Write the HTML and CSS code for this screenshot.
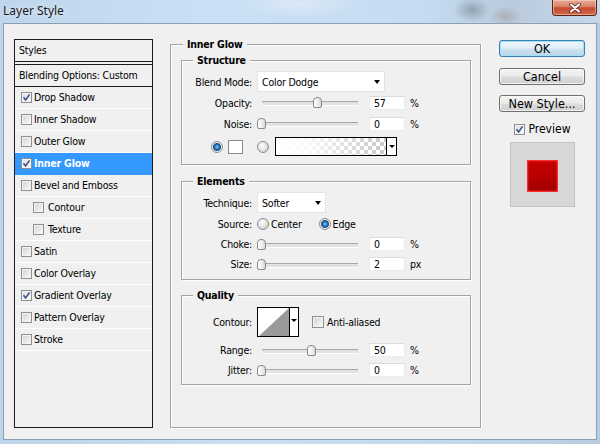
FILE: index.html
```html
<!DOCTYPE html>
<html>
<head>
<meta charset="utf-8">
<title>Layer Style</title>
<link rel="stylesheet" href="styles.css">
</head>
<body>
<div class="window">
  <div class="titlebar">
    <span class="title">Layer Style</span>
    <div class="close">
      <svg width="12" height="10" viewBox="0 0 12 10">
        <path d="M2 1.5 L10 8.5 M10 1.5 L2 8.5" stroke="#4a1c12" stroke-width="3.6" stroke-linecap="round" fill="none"/>
        <path d="M2 1.5 L10 8.5 M10 1.5 L2 8.5" stroke="#ffffff" stroke-width="2.2" stroke-linecap="round" fill="none"/>
      </svg>
    </div>
  </div>
  <div class="client">
    <div class="styles-list">
      <div class="list-head">Styles</div>
      <div class="list-blend">Blending Options: Custom</div>
      <div class="item"><span class="cb on"><svg width="9" height="9" viewBox="0 0 9 9"><path d="M1.5 4.3 L3.6 7 L7.6 1.4" stroke="#3b4f91" stroke-width="1.6" fill="none"/></svg></span>Drop Shadow</div>
      <div class="item"><span class="cb"></span>Inner Shadow</div>
      <div class="item"><span class="cb"></span>Outer Glow</div>
      <div class="item selected"><span class="cb on"><svg width="9" height="9" viewBox="0 0 9 9"><path d="M1.5 4.3 L3.6 7 L7.6 1.4" stroke="#3b4f91" stroke-width="1.6" fill="none"/></svg></span>Inner Glow</div>
      <div class="item"><span class="cb"></span>Bevel and Emboss</div>
      <div class="item sub"><span class="cb"></span>Contour</div>
      <div class="item sub"><span class="cb"></span>Texture</div>
      <div class="item"><span class="cb"></span>Satin</div>
      <div class="item"><span class="cb"></span>Color Overlay</div>
      <div class="item"><span class="cb on"><svg width="9" height="9" viewBox="0 0 9 9"><path d="M1.5 4.3 L3.6 7 L7.6 1.4" stroke="#3b4f91" stroke-width="1.6" fill="none"/></svg></span>Gradient Overlay</div>
      <div class="item"><span class="cb"></span>Pattern Overlay</div>
      <div class="item"><span class="cb"></span>Stroke</div>
    </div>

    <div class="group outer">
      <div class="gtitle">Inner Glow</div>

      <div class="group sub-group structure">
        <div class="gtitle">Structure</div>
        <div class="row blend-row">
          <span class="lbl">Blend Mode:</span>
          <div class="select select-blend">Color Dodge<span class="arrow"></span></div>
        </div>
        <div class="row">
          <span class="lbl">Opacity:</span>
          <div class="slider"><span class="thumb" style="left:56px"></span></div>
          <div class="num">57</div><span class="unit">%</span>
        </div>
        <div class="row">
          <span class="lbl">Noise:</span>
          <div class="slider"><span class="thumb" style="left:0px"></span></div>
          <div class="num">0</div><span class="unit">%</span>
        </div>
        <div class="row color-row">
          <span class="radio on"></span>
          <span class="swatch"></span>
          <span class="radio radio2"></span>
          <div class="gradbox"><span class="grad"></span><span class="gradarrow"><span class="arrow"></span></span></div>
        </div>
      </div>

      <div class="group sub-group elements">
        <div class="gtitle">Elements</div>
        <div class="row tech-row">
          <span class="lbl">Technique:</span>
          <div class="select select-tech">Softer<span class="arrow"></span></div>
        </div>
        <div class="row source-row">
          <span class="lbl">Source:</span>
          <span class="radio"></span><span class="rtext">Center</span>
          <span class="radio on edge-radio"></span><span class="rtext">Edge</span>
        </div>
        <div class="row row20">
          <span class="lbl">Choke:</span>
          <div class="slider"><span class="thumb" style="left:0px"></span></div>
          <div class="num">0</div><span class="unit">%</span>
        </div>
        <div class="row row20">
          <span class="lbl">Size:</span>
          <div class="slider"><span class="thumb" style="left:0px"></span></div>
          <div class="num">2</div><span class="unit">px</span>
        </div>
      </div>

      <div class="group sub-group quality">
        <div class="gtitle">Quality</div>
        <div class="row contour-row">
          <span class="lbl">Contour:</span>
          <div class="contour">
            <svg class="curve" width="31" height="28" viewBox="0 0 31 28"><polygon points="1,28 31,0 31,28" fill="#9a9a9a"/></svg>
            <span class="carrow"><span class="arrow"></span></span>
          </div>
          <span class="cb aa"></span><span class="aatext">Anti-aliased</span>
        </div>
        <div class="row row20 range-row">
          <span class="lbl">Range:</span>
          <div class="slider"><span class="thumb" style="left:50px"></span></div>
          <div class="num">50</div><span class="unit">%</span>
        </div>
        <div class="row row20">
          <span class="lbl">Jitter:</span>
          <div class="slider"><span class="thumb" style="left:0px"></span></div>
          <div class="num">0</div><span class="unit">%</span>
        </div>
      </div>
    </div>

    <div class="side">
      <div class="btn default">OK</div>
      <div class="btn btn-cancel">Cancel</div>
      <div class="btn btn-new">New Style...</div>
      <div class="preview-row"><span class="cb on"><svg width="9" height="9" viewBox="0 0 9 9"><path d="M1.5 4.3 L3.6 7 L7.6 1.4" stroke="#3b4f91" stroke-width="1.6" fill="none"/></svg></span><span class="ptext">Preview</span></div>
      <div class="preview-box"><div class="red"></div></div>
    </div>
  </div>
</div>
</body>
</html>
```

FILE: styles.css
```css
* { box-sizing: border-box; }
html, body { margin: 0; padding: 0; }
body {
  width: 600px;
  height: 444px;
  overflow: hidden;
  font-family: "DejaVu Sans Condensed", "DejaVu Sans", sans-serif;
  font-size: 10.5px;
  letter-spacing: -0.2px;
  color: #000;
  background: linear-gradient(to right, #bcd3e9 0%, #c9def2 40%, #c3d9ee 75%, #b7ccdf 100%);
}
.window { display: flex; flex-direction: column; height: 444px; }

.titlebar {
  height: 23px;
  flex: none;
  display: flex;
  align-items: flex-start;
  justify-content: space-between;
  background:
    radial-gradient(ellipse 18px 12px at 472px 10px, rgba(80, 92, 104, 0.4), rgba(80, 92, 104, 0) 100%),
    radial-gradient(ellipse 16px 10px at 505px 16px, rgba(150, 110, 100, 0.3), rgba(150, 110, 100, 0) 100%),
    radial-gradient(ellipse 60px 14px at 300px 4px, rgba(255, 255, 255, 0.35), rgba(255, 255, 255, 0) 100%),
    linear-gradient(to right, #bed5eb 0%, #cbe0f4 35%, #c6dcf1 70%, #b9cbdc 85%, #c5d7e8 100%);
}
.title {
  font-family: "Noto Sans", "Open Sans", sans-serif;
  font-size: 12px;
  letter-spacing: 0;
  line-height: 22px;
  padding-left: 3px;
  color: #1a1a1a;
  text-shadow: 0 0 6px rgba(255, 255, 255, 0.9);
}
.close {
  width: 45px;
  height: 16px;
  margin-right: 3px;
  border: 1px solid #5a2318;
  border-top: none;
  border-radius: 0 0 4px 4px;
  background: linear-gradient(#e8ab98 0%, #d98066 45%, #c44a30 52%, #cf6a4d 100%);
  box-shadow: inset 0 0 0 1px rgba(255, 220, 200, 0.5);
  display: flex;
  align-items: center;
  justify-content: center;
}

.client {
  margin: 0 3px;
  height: 417px;
  flex: none;
  border: 1px solid #8d9fb4;
  background: #f0f0f0;
  display: flex;
  align-items: flex-start;
  padding: 15px 0 0 10px;
}

/* styles list */
.styles-list {
  width: 139px;
  height: 389px;
  flex: none;
  border: 1px solid #1c1c1c;
  background: #f0f0f0;
  display: flex;
  flex-direction: column;
}
.list-head {
  height: 22px;
  border-bottom: 1px solid #1c1c1c;
  padding: 0 0 1px 4px;
  display: flex;
  align-items: center;
}
.list-blend {
  margin-top: 2px;
  height: 23px;
  border-top: 1px solid #1c1c1c;
  border-bottom: 1px solid #1c1c1c;
  padding: 0 0 1px 4px;
  display: flex;
  align-items: center;
}
.item {
  height: 22px;
  border-bottom: 1px solid #ffffff;
  padding: 0 0 1px 6px;
  display: flex;
  align-items: center;
}
.item .cb { margin-right: 2px; }
.item.sub { padding-left: 18px; }
.item.sub .cb { margin-right: 4px; }
.item.selected {
  background: #3399ff;
  border-bottom-color: #3399ff;
  color: #fff;
  font-weight: bold;
}

.cb {
  width: 11px;
  height: 11px;
  flex: none;
  border: 1px solid #8e8f8f;
  background: linear-gradient(135deg, #d2d2d2 0%, #eeeeee 70%, #f8f8f8 100%);
  box-shadow: inset 0 0 0 1px #f4f4f4;
  display: flex;
  align-items: center;
  justify-content: center;
}
.cb.on { background: linear-gradient(135deg, #dedede 0%, #f4f4f4 70%, #fafafa 100%); }

/* groups */
.group {
  border: 1px solid #a3a3a3;
  box-shadow: inset 1px 1px 0 #ffffff, 1px 1px 0 #ffffff;
}
.gtitle {
  width: max-content;
  height: 13px;
  line-height: 13px;
  margin-top: -7px;
  padding: 0 4px;
  background: #f0f0f0;
  font-weight: bold;
}
.outer {
  width: 311px;
  height: 384px;
  flex: none;
  margin-left: 17px;
  margin-top: 5px;
}
.outer > .gtitle { margin-left: 12px; }
.sub-group { width: 290px; margin-left: 10px; }
.sub-group > .gtitle { margin-left: 11px; }
.structure { margin-top: 9px; padding-bottom: 8px; }
.elements { margin-top: 16px; padding-bottom: 5px; }
.quality { margin-top: 15px; padding-bottom: 4px; }

.row { display: flex; align-items: center; height: 21px; }
.row20 { height: 20px; }
.blend-row, .tech-row { margin-top: 4px; }
.lbl { width: 70px; flex: none; text-align: right; margin-right: 5px; }

.select {
  height: 21px;
  display: flex;
  align-items: center;
  background: #fff;
  border: 1px solid #e4e4e4;
  padding-left: 4px;
}
.select-blend { width: 128px; }
.select-tech { width: 69px; }
.arrow {
  width: 0;
  height: 0;
  border-left: 3.5px solid transparent;
  border-right: 3.5px solid transparent;
  border-top: 4px solid #000;
}
.select .arrow { margin-left: auto; margin-right: 4px; }

.slider { position: relative; width: 104px; height: 13px; flex: none; }
.slider::before {
  content: "";
  position: absolute;
  left: 5px;
  right: 3px;
  top: 5px;
  height: 3px;
  border-top: 1px solid #a8a8a8;
  border-bottom: 1px solid #ffffff;
  background: #e2e2e2;
}
.thumb {
  position: absolute;
  top: 1px;
  width: 9px;
  height: 11px;
  border: 1px solid #8a8a8a;
  border-radius: 4px 4px 2px 2px;
  background: linear-gradient(to right, #ffffff 0%, #ececec 60%, #d6d6d6 100%);
}
.num {
  width: 36px;
  height: 14px;
  flex: none;
  margin-left: 8px;
  background: #fff;
  border: 1px solid #ebebeb;
  border-top-color: #dcdcdc;
  padding-left: 4px;
  line-height: 12px;
}
.unit { margin-left: 5px; }

.color-row { margin-top: 3px; height: 19px; }
.radio {
  width: 12px;
  height: 12px;
  flex: none;
  border-radius: 50%;
  border: 1px solid #8b8b8b;
  background: radial-gradient(circle at 40% 35%, #ffffff 0%, #e6e6e6 45%, #c9c9c9 100%);
}
.radio.on {
  background: radial-gradient(circle at 50% 50%, #8fd0f5 0px, #2a7bbf 2px, #1b4f86 3.6px, #f2f2f2 4.4px, #d8d8d8 100%);
}
.color-row .radio.on { margin-left: 29px; }
.swatch {
  width: 15px;
  height: 14px;
  flex: none;
  margin-left: 5px;
  background: #fff;
  border: 1px solid #8a8a8a;
}
.radio2 { margin-left: 14px; }
.gradbox {
  width: 122px;
  height: 19px;
  flex: none;
  margin-left: 6px;
  border: 1px solid #000;
  display: flex;
}
.grad {
  flex: 1;
  background:
    linear-gradient(to right, #ffffff 0%, rgba(255, 255, 255, 0.85) 30%, rgba(255, 255, 255, 0) 95%),
    repeating-conic-gradient(#cccccc 0% 25%, #ffffff 0% 50%) 0 0 / 8px 8px;
}
.gradarrow {
  width: 10px;
  flex: none;
  border-left: 1px solid #000;
  background: #fff;
  display: flex;
  align-items: center;
  justify-content: center;
}
.gradarrow .arrow { border-left-width: 3px; border-right-width: 3px; border-top-width: 3px; }

.source-row { height: 21px; }
.rtext { margin-left: 2px; }
.edge-radio { margin-left: 17px; }

.contour-row { margin-top: 5px; height: 30px; }
.contour {
  width: 42px;
  height: 30px;
  flex: none;
  border: 1px solid #000;
  background: #fff;
  display: flex;
}
.curve { display: block; flex: none; }
.carrow {
  flex: 1;
  border-left: 1px solid #000;
  display: flex;
  align-items: center;
  justify-content: center;
}
.carrow .arrow { border-left-width: 3px; border-right-width: 3px; border-top-width: 3px; margin-bottom: 4px; }
.cb.aa { margin-left: 13px; width: 12px; height: 12px; }
.aatext { margin-left: 3px; }
.range-row { margin-top: 3px; }

/* right side */
.side {
  width: 86px;
  flex: none;
  margin-left: 18px;
  margin-top: 1px;
  display: flex;
  flex-direction: column;
  align-items: center;
}
.btn {
  width: 86px;
  height: 17px;
  border: 1px solid #707070;
  border-radius: 3px;
  background: linear-gradient(#f3f3f3 0%, #ebebeb 48%, #dddddd 52%, #cfcfcf 100%);
  box-shadow: inset 0 0 0 1px rgba(255, 255, 255, 0.7);
  display: flex;
  align-items: center;
  justify-content: center;
  font-size: 12.5px;
  letter-spacing: 0;
}
.btn.default {
  border-color: #3c7fb1;
  background: linear-gradient(#eef6fb 0%, #e2eff8 48%, #cfe2ef 52%, #bcd6e8 100%);
  box-shadow: inset 0 0 0 1px #9fe0fb;
}
.btn-cancel { margin-top: 11px; }
.btn-new { margin-top: 10px; }
.preview-row {
  margin-top: 9px;
  height: 16px;
  display: flex;
  align-items: center;
}
.ptext { margin-left: 4px; font-size: 12px; letter-spacing: 0; }
.preview-box {
  margin-top: 5px;
  width: 65px;
  height: 65px;
  background: #d7d7d7;
  border: 1px solid #c3c3c3;
  display: flex;
  align-items: center;
  justify-content: center;
  padding-top: 3px;
}
.red {
  width: 31px;
  height: 32px;
  border: 1px solid #ff2a2a;
  background: linear-gradient(#c40000 0%, #b30000 60%, #a20000 100%);
  box-shadow: inset 0 0 2px #ff3a3a;
}
```
